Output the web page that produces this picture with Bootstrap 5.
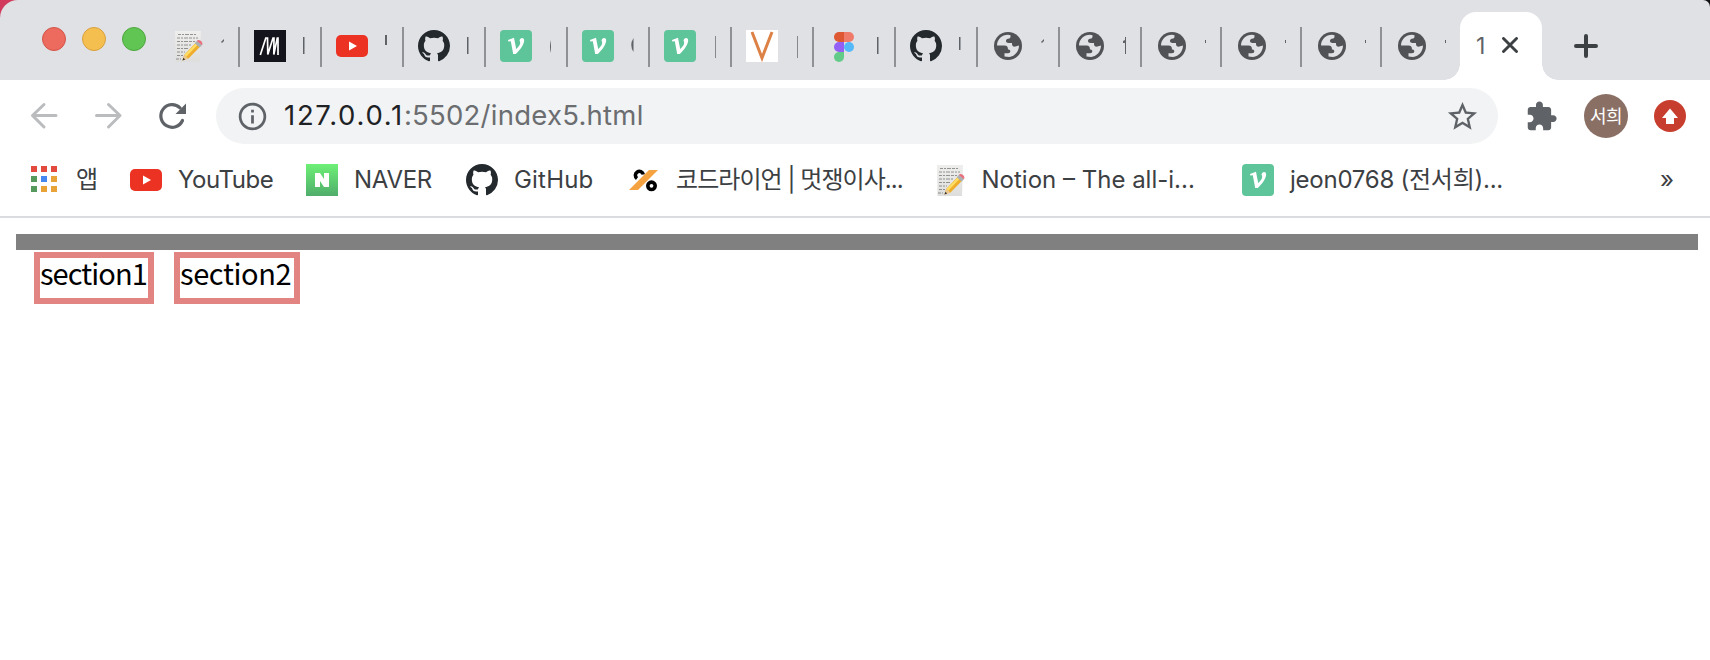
<!DOCTYPE html>
<html lang="ko">
<head>
<meta charset="utf-8">
<title>index5</title>
<link href="https://cdn.jsdelivr.net/npm/bootstrap@5.3.0/dist/css/bootstrap.min.css" rel="stylesheet">
<style>
body{font-family:Inter,"Noto Sans CJK KR",sans-serif;color:#3c4043;background:#fff;overflow:hidden}
svg{display:block;flex:none}
.desktop{background:linear-gradient(90deg,#d13a5c 50%,#111 50%)}
.strip{height:80px;background:#dfe1e5;border-radius:18px 7px 0 0;padding-left:42px}
.light{width:24px;height:24px;border-radius:50%;border:1px solid;margin-right:16px;margin-top:27px}
.tabs{margin-left:-6px}
.tab{width:82px;height:40px;margin-top:27px;border-left:2px solid #8f9195;padding:3px 0 0 14px}
.tab.first{border-color:transparent}
.tab.slim{width:80px}
.sliver{width:3px;height:32px;margin-left:17px}
.active-tab{position:relative;width:82px;height:68px;margin-top:12px;background:#fff;border-radius:16px 16px 0 0;font-size:23px;color:#5f6368;padding:0 24px 7px 16px}
.active-tab::before,.active-tab::after{content:"";position:absolute;bottom:0;width:16px;height:16px}
.active-tab::before{left:-16px;background:radial-gradient(circle at 0 0,transparent 15.5px,#fff 16px)}
.active-tab::after{right:-16px;background:radial-gradient(circle at 100% 0,transparent 15.5px,#fff 16px)}
.tools{height:72px;padding:0 24px 0 28px}
.omni{width:1282px;height:56px;background:#f1f3f4;padding:0 18px 0 20px;font-size:27.5px;color:#6b6d70}
.url{margin-left:15px;letter-spacing:.25px;white-space:nowrap}
.url b{font-weight:400;color:#202124;letter-spacing:1.7px}
.avatar{width:44px;height:44px;background:#8a6f65;color:#fff;font-size:18px;letter-spacing:-.5px}
.marks{height:66px;border-bottom:2px solid #dadce0;padding:0 0 8px 28px;font-size:24px;white-space:nowrap}
.marks span{margin-left:16px}
.sheet{padding:16px 12px 0 16px}
.bar{height:16px;background:#808080}
.sec{height:52px;border:6px solid #e28582;font:29px/28px "Noto Sans CJK KR",sans-serif;letter-spacing:-.95px;color:#000;white-space:nowrap}
.sec+.sec{letter-spacing:-.4px}
</style>
</head>
<body>
<svg width="0" height="0" class="position-absolute">
<defs>
<linearGradient id="ng" x2="0" y2="1"><stop stop-color="#6df075"/><stop offset="1" stop-color="#50ad6c"/></linearGradient>
<linearGradient id="pg" x2="0" y2="1"><stop stop-color="#eeeeec"/><stop offset="1" stop-color="#dededc"/></linearGradient>
<symbol id="gh" viewBox="0 0 16 16"><path fill="#24292e" d="M8 0C3.58 0 0 3.58 0 8c0 3.54 2.29 6.53 5.47 7.59.4.07.55-.17.55-.38 0-.19-.01-.82-.01-1.49-2.01.37-2.53-.49-2.69-.94-.09-.23-.48-.94-.82-1.13-.28-.15-.68-.52-.01-.53.63-.01 1.08.58 1.23.82.72 1.21 1.87.87 2.33.66.07-.52.28-.87.51-1.07-1.78-.2-3.64-.89-3.64-3.95 0-.87.31-1.59.82-2.15-.08-.2-.36-1.02.08-2.12 0 0 .67-.21 2.2.82.64-.18 1.32-.27 2-.27s1.36.09 2 .27c1.53-1.04 2.2-.82 2.2-.82.44 1.1.16 1.92.08 2.12.51.56.82 1.27.82 2.15 0 3.07-1.87 3.75-3.65 3.95.29.25.54.73.54 1.48 0 1.07-.01 1.93-.01 2.2 0 .21.15.46.55.38A8 8 0 0 0 16 8c0-4.42-3.58-8-8-8z"/></symbol>
<symbol id="yt" viewBox="0 0 32 32"><rect y="5" width="32" height="22" rx="5" fill="#eb3223"/><path d="M13 11.500l8 4.500-8 4.500z" fill="#fff"/></symbol>
<symbol id="velog" viewBox="0 0 32 32"><rect width="32" height="32" rx="4" fill="#5ec49a"/><path d="M8 10L14 7.800L16.200 19C20 15.500 21 13.500 19.500 10.500C20 7.500 24 7 24.200 10.500C23.800 15 20 20 15.800 24H13.200L10.800 11.200L8.300 11.500Z" fill="#fff"/></symbol>
<symbol id="memo" viewBox="0 0 32 32"><path d="M3 1H29L28 32H3.500Z" fill="url(#pg)"/><g stroke="#555" stroke-width=".9" stroke-dasharray="3 1 2 1 4 1" opacity=".65"><path d="M6 4.500H24M5 8H26M5 11.500H23M5 15H19M5 18.500H17M5 22H13M5 25.500H12M4 29H9"/></g><path d="M10.500 30.500L12.200 25L24.500 12L28.800 16L16.500 28.500Z" fill="#efad2c"/><path d="M12.500 25L24.500 12.500L26.200 14.200L14 27Z" fill="#ffdc62"/><path d="M10.500 30.500L12.200 25L16.500 28.500Z" fill="#e9c891"/><path d="M10.500 30.500L11.300 27.800L13.200 29.500Z" fill="#333"/><path d="M22.800 13.200L25 10.800L30 15L27.600 17.400Z" fill="#a9b1b5"/><path d="M24.800 11C26.500 8 32 12 30 15.200Z" fill="#e8707d"/></symbol>
<symbol id="globe" viewBox="0 0 32 32"><circle cx="16" cy="16" r="14" fill="#505256"/><path d="M5 15.500C5 9.500 10 4.800 16 4.800L18.500 5.200V6.500C18.500 8 17.500 8.700 16 8.700C14.700 8.700 14 9.700 14 11C14 12.300 15 13 16.500 13H20V14C20 16 21.500 17 23.500 16.500L27 15.500C27 21 23 26.500 17 27L12.500 26.500V23.300H16C17.500 23.300 18.300 22.500 18.300 21.300C18.300 20 17.500 19.500 16 19.500C16 17 15 15.500 12.500 15.500Z" fill="#dfe1e5"/></symbol>
</defs>
</svg>
<div class="desktop">
<header class="strip d-flex">
<i class="light" style="background:#ed6a5e;border-color:#d35448"></i><i class="light" style="background:#f5bf4f;border-color:#d8a040"></i><i class="light" style="background:#61c554;border-color:#4fa73f"></i>
<nav class="tabs d-flex" id="tabs"></nav>
<div class="active-tab d-flex align-items-center justify-content-between"><span class="pt-2">1</span><svg width="16" height="16" viewBox="0 0 16 16" class="mt-1"><path d="M1.500 1.500l13 13m0-13l-13 13" stroke="#3c4043" stroke-width="2.900" stroke-linecap="round"/></svg></div>
<svg width="24" height="24" viewBox="0 0 24 24" style="margin:34px 0 0 32px"><path d="M2 12H22M12 2V22" stroke="#3c4043" stroke-width="4" stroke-linecap="round"/></svg>
</header>
</div>
<div class="tools d-flex align-items-center">
<svg width="32" height="32" viewBox="0 0 32 32" fill="none" stroke="#babcbe" stroke-width="3" stroke-linecap="round" stroke-linejoin="round"><path d="M28 15.500H4.500M16 4.500L4.500 15.500L16 27"/></svg>
<svg width="32" height="32" viewBox="0 0 32 32" fill="none" stroke="#babcbe" stroke-width="3" stroke-linecap="round" stroke-linejoin="round" style="margin-left:32px"><path d="M4.500 15.500H28M16.500 4.500L28 15.500L16.500 27"/></svg>
<svg width="32" height="32" viewBox="0 0 32 32" style="margin-left:32px"><path d="M26.500 20.500A11.300 11.300 0 1 1 24 7.800" fill="none" stroke="#5f6368" stroke-width="3.200" stroke-linecap="round"/><path d="M30 3.500V14H19.500Z" fill="#5f6368"/></svg>
<div class="omni rounded-pill d-flex align-items-center" style="margin-left:28px">
<svg width="33" height="33" viewBox="0 0 24 24"><path fill="#5f6368" d="M11 7h2v2h-2zm0 4h2v6h-2zm1-9C6.480 2 2 6.480 2 12s4.480 10 10 10 10-4.480 10-10S17.520 2 12 2zm0 18c-4.410 0-8-3.590-8-8s3.590-8 8-8 8 3.590 8 8-3.590 8-8 8z"/></svg>
<span class="url"><b>127.0.0.1</b>:5502/index5.html</span>
<svg class="ms-auto" width="35" height="35" viewBox="0 0 24 24"><path fill="#5f6368" d="M22 9.240l-7.190-.62L12 2 9.190 8.630 2 9.240l5.460 4.730L5.820 21 12 17.270 18.180 21l-1.630-7.030L22 9.240zM12 15.400l-3.760 2.270 1-4.280-3.320-2.880 4.380-.38L12 6.100l1.710 4.040 4.380.38-3.320 2.880 1 4.280L12 15.400z"/></svg>
</div>
<svg width="33" height="33" viewBox="0 0 24 24" style="margin-left:27px"><path fill="#5f6368" d="M20.500 11H19V7c0-1.100-.9-2-2-2h-4V3.500C13 2.120 11.880 1 10.500 1S8 2.120 8 3.500V5H4c-1.100 0-1.990.9-1.990 2v3.800H3.500c1.490 0 2.700 1.210 2.700 2.700s-1.210 2.700-2.700 2.700H2V20c0 1.100.9 2 2 2h3.800v-1.500c0-1.490 1.210-2.700 2.700-2.700 1.490 0 2.700 1.210 2.700 2.700V22H17c1.100 0 2-.9 2-2v-4h1.500c1.380 0 2.500-1.120 2.500-2.500S21.880 11 20.500 11z"/></svg>
<div class="avatar rounded-circle d-flex align-items-center justify-content-center" style="margin-left:26px">서희</div>
<svg class="ms-auto" width="32" height="32" viewBox="0 0 32 32"><circle cx="16" cy="16" r="16" fill="#c83e2e"/><path d="M16 8.500L24 18H20V24H12V18H8Z" fill="#fff"/></svg>
</div>
<div class="marks d-flex align-items-center" id="marks"></div>
<main class="sheet">
<div class="bar"></div>
<div class="d-flex" style="padding:2px 0 0 18px"><section class="sec" style="width:120px">section1</section><section class="sec" style="width:126px;margin-left:20px">section2</section></div>
</main>
<script>
const use=n=>`<svg width="32" height="32"><use href="#${n}"/></svg>`;
const svg=s=>`<svg width="32" height="32" viewBox="0 0 32 32">${s}</svg>`;
const medium=svg('<rect width="32" height="32" fill="#14141c"/><path d="M6.300 25L11.800 8H13.500L13.800 24.500L19 8H20L19.800 24.500L23.300 8H24V25" stroke="#fff" stroke-width="1.700" fill="none"/>');
const vfav=svg('<rect width="32" height="32" fill="#fff"/><path d="M6 2L16 28L26 2" stroke="#dd8246" stroke-width="3" fill="none"/>');
const figma=svg('<path d="M16 2H11a5 5 0 0 0 0 10h5z" fill="#de5833"/><path d="M16 2h5a5 5 0 0 1 0 10h-5z" fill="#ef7b6b"/><path d="M16 12h-5a5 5 0 0 0 0 10h5z" fill="#935ff4"/><circle cx="21" cy="17" r="5" fill="#55b8f8"/><path d="M16 22h-5a5 5 0 1 0 5 5z" fill="#62cb87"/>');
// Each tab: favicon and the visible edge of its clipped title.
const tick='M0 12L3 9V11L1 13Z', line='M0 7H1.500V24H0Z';
const tabs=[[use('memo'),tick],[medium,line],[use('yt'),'M0 5H2V15H0Z'],[use('gh'),line],[use('velog'),'M2 10Q0 17 2 23Z'],[use('velog'),'M2.500 8Q-2 15 2.500 22Z'],[use('velog'),'M2 6H2.700V28H2Z'],[vfav,'M2 6H2.700V28H2Z'],[figma,line],[use('gh'),'M0 7H1.500V20H0Z'],[use('globe'),tick],[use('globe'),'M0 11L2 10V7H3V24H2V13H0Z'],[use('globe'),'M0 10H1V13H0Z'],[use('globe'),'M0 10H1V13H0Z'],[use('globe'),'M0 10H1V13H0Z'],[use('globe'),'M0 10H1V13H0Z']];
document.getElementById('tabs').innerHTML=tabs.map((t,i)=>`<div class="tab d-flex ${i?'':'first'} ${i>11?'slim':''}">${t[0]}<svg class="sliver" viewBox="0 0 3 32"><path d="${t[1]}" fill="#5f6368"/></svg></div>`).join('');
const c=['#e14a3d','#e14a3d','#e14a3d','#559a5c','#4688f1','#e7a338','#559a5c','#e7a338','#e7a338'];
const apps=svg(c.map((f,i)=>`<rect x="${3+i%3*10}" y="${2+Math.floor(i/3)*10}" width="6" height="6" fill="${f}"/>`).join(''));
const naver=svg('<rect width="32" height="32" fill="url(#ng)"/><path d="M9 9h5l4 6V9h5v14h-5l-4-6v6H9z" fill="#fff"/>');
const lion=svg('<path d="M9 14.500A4 4 0 1 1 15.300 10.500" fill="none" stroke="#000" stroke-width="3.600"/><path d="M21 6H30L10 26H1Z" fill="#f4a340"/><circle cx="23.500" cy="21.800" r="3.700" fill="none" stroke="#000" stroke-width="3.600"/>');
// Bookmark: icon, title, width of the whole entry, letter spacing.
const marks=[[apps,'앱',102,0],[use('yt'),'YouTube',176,-.45],[naver,'NAVER',160,-.3],[use('gh'),'GitHub',162,.2],[lion,'코드라이언 | 멋쟁이사...',305.5,-.95],[use('memo'),'Notion – The all-i...',308.5,0],[use('velog'),'jeon0768 (전서희)...',402,-.25]];
document.getElementById('marks').innerHTML=marks.map(m=>`<div class="d-flex align-items-center" style="width:${m[2]}px">${m[0]}<span style="letter-spacing:${m[3]}px">${m[1]}</span></div>`).join('')+'<span>»</span>';
</script>
<script src="https://cdn.jsdelivr.net/npm/bootstrap@5.3.0/dist/js/bootstrap.bundle.min.js"></script>
</body>
</html>
